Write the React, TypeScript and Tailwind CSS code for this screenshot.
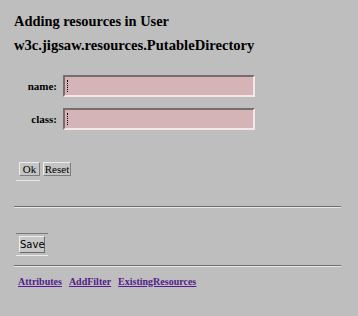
const Field = ({ label }: { label: string }) => (
  <div className="flex items-center h-[22px]">
    <span className="w-[42px] text-right pr-[6px] text-[11px] font-bold">{label}</span>
    <div className="relative w-[192px] h-full bg-[#d4b4b6] border-2 border-t-[#786c6c] border-l-[#786c6c] border-b-[#f6e6e6] border-r-[#f6e6e6]">
      <span className="absolute left-[2px] top-[3px] w-[3px] h-[12px] border-l border-dotted border-black" />
    </div>
  </div>
);

const Btn = ({ children, w }: { children: string; w: string }) => (
  <button className={`${w} h-[14px] bg-[#c4c4c4] border border-t-[#ececec] border-l-[#ececec] border-b-[#7c7c7c] border-r-[#7c7c7c] text-[11px] leading-none text-black`}>
    {children}
  </button>
);

export default function App() {
  return (
    <div className="w-[358px] h-[316px] bg-[#bebebe] text-black font-['Liberation_Serif',serif] pl-[14px] pr-[17px] pt-[13px]">
      <h1 className="text-[14.4px] font-bold leading-[17px]">Adding resources in User</h1>
      <h2 className="text-[14.6px] font-bold leading-[17px] mt-[7px]">w3c.jigsaw.resources.PutableDirectory</h2>

      <div className="flex flex-col gap-[11px] mt-[21px] ml-[7px]">
        <Field label="name:" />
        <Field label="class:" />
      </div>

      <div className="flex flex-col ml-[2px] mt-[32px] w-fit">
        <div className="flex gap-[3px] pl-[3px]">
          <Btn w="w-[21px]">Ok</Btn>
          <Btn w="w-[28px]">Reset</Btn>
        </div>
        <div className="mt-[4px] w-[24px] h-px bg-[#e8e8e8]" />
      </div>

      <div className="mt-[25px] border-t border-t-[#6e6e6e] border-b border-b-[#e6e6e6]" />

      <div className="flex flex-col ml-[2px] mt-[25px] w-[32px]">
        <div className="h-px bg-[#7a7a7a]" />
        <div className="pl-[3px] pt-[2px] flex">
          <button className="w-[26px] h-[17px] bg-[#c8c8c8] border border-t-[#ececec] border-l-[#ececec] border-b-[#6c6c6c] border-r-[#6c6c6c] text-[10px] leading-none font-['DejaVu_Sans',sans-serif]">
            Save
          </button>
        </div>
        <div className="mt-[2px] h-px bg-[#ececec]" />
      </div>

      <div className="mt-[9px] border-t border-t-[#6e6e6e] border-b border-b-[#e6e6e6]" />

      <div className="flex gap-[7px] ml-[4px] mt-[8px] text-[10px] leading-[13px] font-bold text-[#551a8b]">
        <a href="#" className="underline">Attributes</a>
        <a href="#" className="underline">AddFilter</a>
        <a href="#" className="underline">ExistingResources</a>
      </div>
    </div>
  );
}
